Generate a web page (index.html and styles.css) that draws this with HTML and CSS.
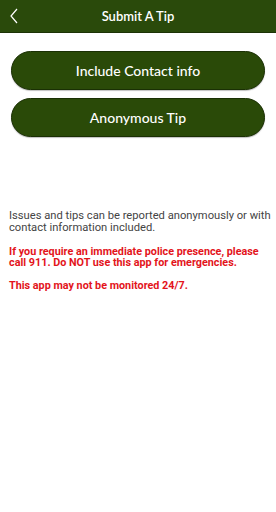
FILE: index.html
```html
<!DOCTYPE html>
<html lang="en">
<head>
    <meta charset="UTF-8">
    <meta name="viewport" content="width=device-width, initial-scale=1.0">
    <title>Submit A Tip</title>
    <link rel="stylesheet" href="styles.css">
</head>
<body>
    <header class="topbar">
        <span class="back">
            <svg width="10" height="16" viewBox="0 0 10 16"><path d="M8 1 L2 8 L8 15" fill="none" stroke="#fff" stroke-width="1.2"/></svg>
        </span>
        <h1>Submit A Tip</h1>
    </header>
    <div class="actions">
        <button class="pill">Include Contact info</button>
        <button class="pill">Anonymous Tip</button>
    </div>
    <div class="info">
        <p class="note">Issues and tips can be reported anonymously or with contact information included.</p>
        <p class="warn">If you require an immediate police presence, please call 911. Do NOT use this app for emergencies.</p>
        <p class="warn">This app may not be monitored 24/7.</p>
    </div>
</body>
</html>
```

FILE: styles.css
```css
body {
    margin: 0;
    background-color: #fff;
    font-family: Roboto, "Liberation Sans", sans-serif;
}
.topbar {
    position: relative;
    height: 32px;
    background-color: #2a4a0b;
    border-bottom: 1px solid #1c3306;
    display: flex;
    align-items: center;
    justify-content: center;
}
.topbar h1 {
    margin: 0;
    color: #fff;
    font-family: Lato, sans-serif;
    font-size: 13px;
    font-weight: 600;
}
.back {
    position: absolute;
    left: 9px;
    top: 8px;
    display: flex;
}
.actions {
    display: flex;
    flex-direction: column;
    gap: 8px;
    padding: 18px 11px 0 11px;
}
.pill {
    height: 39px;
    border-radius: 20px;
    border: 1px solid #1a3004;
    background-color: #2a4a08;
    color: #fff;
    font-family: Lato, sans-serif;
    font-size: 14px;
    font-weight: 500;
    box-shadow: 0 1px 1px rgba(0, 0, 0, 0.25);
}
.info {
    padding: 73px 2px 0 9px;
}
.info p {
    margin: 0 0 12px 0;
}
.note {
    color: #444;
    font-size: 11.2px;
    line-height: 12px;
}
.warn {
    color: #e3141b;
    font-weight: bold;
    font-size: 10.8px;
    line-height: 11px;
}
```
